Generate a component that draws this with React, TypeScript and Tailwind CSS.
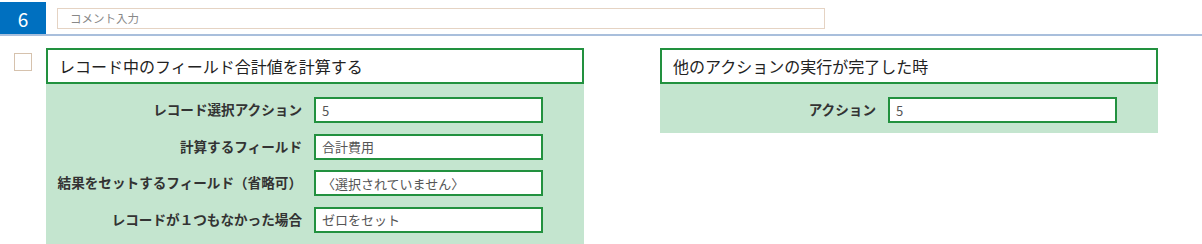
import React from "react";

const font = { fontFamily: '"Noto Sans CJK JP", "Noto Sans", sans-serif' };

function Row({ label, value, labelW }: { label: string; value: string; labelW: string }) {
  return (
    <div className="flex items-center h-[26px]">
      <div className={`${labelW} text-right pr-[12px] text-[13.6px] font-bold text-[#333] leading-none whitespace-nowrap`}>{label}</div>
      <div className="w-[229px] h-[26px] border-2 border-[#22913f] bg-white flex items-center pl-[6px] text-[13px] text-[#555] leading-none">
        {value}
      </div>
    </div>
  );
}

export default function App() {
  return (
    <div className="w-[1202px] h-[244px] bg-white relative overflow-hidden" style={font}>
      <div className="flex items-start pt-[2px] border-b-2 border-[#a9bfdc] h-[36px]">
        <div className="w-[46px] h-[32px] bg-[#0070c0] text-white text-[19px] flex items-center justify-center leading-none">6</div>
        <div className="ml-[11px] mt-[6px] w-[768px] h-[21px] border border-[#e5d3c3] flex items-center pl-[12px] text-[11.5px] text-[#888] leading-none">
          コメント入力
        </div>
      </div>
      <div className="flex items-start mt-[12px]">
        <div className="ml-[14px] mt-[5px] w-[18px] h-[18px] border border-[#d6c2ad] bg-white" />
        <div className="ml-[14px] w-[538px]">
          <div className="h-[36px] border-2 border-[#22913f] bg-white flex items-center pl-[11px] text-[16px] text-[#222] leading-none">
            レコード中のフィールド合計値を計算する
          </div>
          <div className="bg-[#c4e5cf] pt-[13px] pb-[11px] flex flex-col gap-[10.5px]">
            <Row label="レコード選択アクション" value="5" labelW="w-[268px]" />
            <Row label="計算するフィールド" value="合計費用" labelW="w-[268px]" />
            <Row label="結果をセットするフィールド（省略可）" value="〈選択されていません〉" labelW="w-[268px]" />
            <Row label="レコードが１つもなかった場合" value="ゼロをセット" labelW="w-[268px]" />
          </div>
        </div>
        <div className="ml-[76px] w-[498px]">
          <div className="h-[36px] border-2 border-[#22913f] bg-white flex items-center pl-[11px] text-[16px] text-[#222] leading-none">
            他のアクションの実行が完了した時
          </div>
          <div className="bg-[#c4e5cf] pt-[13px] pb-[10px] flex flex-col">
            <Row label="アクション" value="5" labelW="w-[228px]" />
          </div>
        </div>
      </div>
    </div>
  );
}
